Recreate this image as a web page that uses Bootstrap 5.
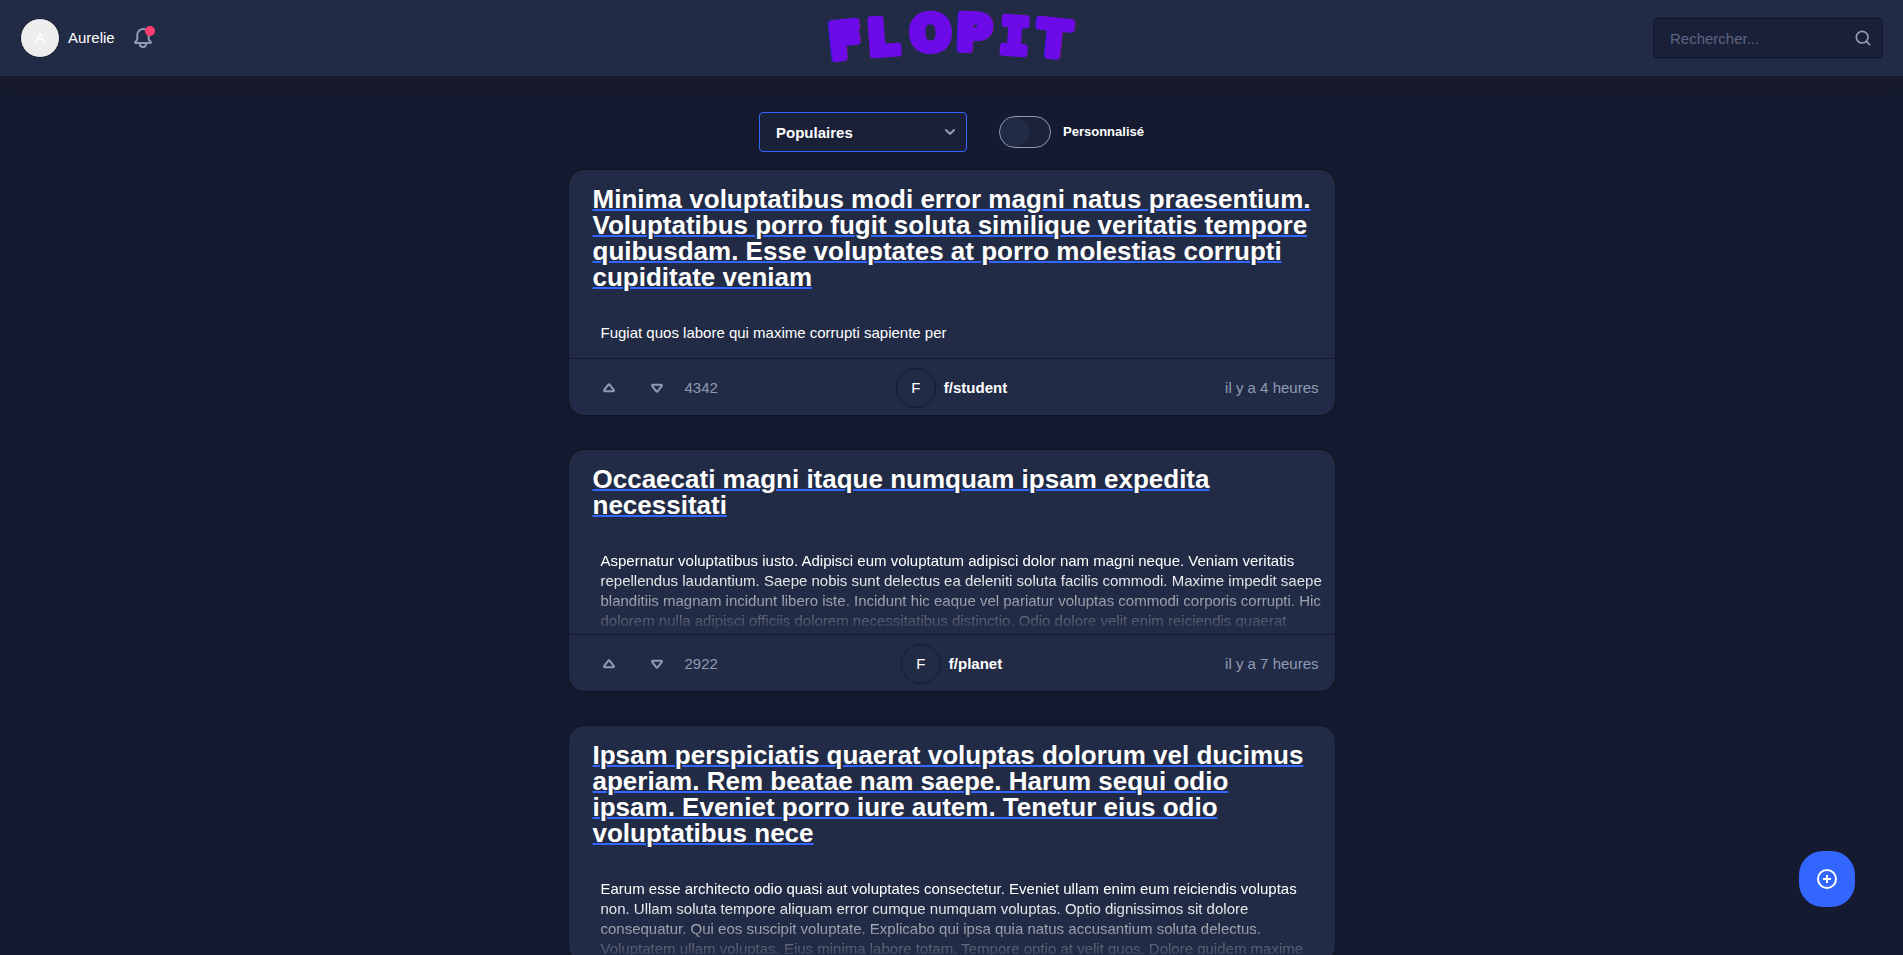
<!DOCTYPE html>
<html lang="fr">
<head>
<meta charset="utf-8">
<meta name="viewport" content="width=device-width, initial-scale=1">
<title>Flopit</title>
<link href="https://cdn.jsdelivr.net/npm/bootstrap@5.3.0/dist/css/bootstrap.min.css" rel="stylesheet">
<style>
  :root { --panel: #222b45; --page: #151a30; --field: #1a2038; --edge: #101426; --hint: #8f9bb3; --primary: #3366ff; }
  body { font-family: "Liberation Sans", Arial, sans-serif; font-size: 15px; line-height: 20px; color: #fff; background: var(--page); }
  a { color: #fff; text-decoration: none; }
  .three-cols { display: grid; grid-template-columns: 1fr auto 1fr; align-items: center; }
  .topbar { background: var(--panel); height: 76px; padding: 0 20px; box-shadow: 0 8px 16px rgba(25, 24, 38, .9); z-index: 2; }
  .avatar { width: 40px; height: 40px; border: 1px solid var(--page); border-radius: 50%; display: flex; align-items: center; justify-content: center; flex: none; }
  .avatar-light { background: #eee; }
  .bell-btn { width: 24px; height: 24px; }
  .notif-dot { position: absolute; width: 10px; height: 10px; top: 0; right: 0; border-radius: 50%; background: #ff3d71; }
  .search-box { width: 230px; height: 40px; }
  .search-box input { height: 40px; background: var(--field); border: 1px solid var(--edge); border-radius: 4px; color: #fff; font-size: 15px; padding: 0 44px 0 16px; }
  .search-box input:focus { background: var(--field); color: #fff; }
  .search-box input::placeholder { color: #5b6582; opacity: 1; }
  .search-box svg { position: absolute; right: 10px; top: 10px; }
  .feed-area { overflow-y: auto; scrollbar-width: none; padding-top: 36px; }
  .feed-area::-webkit-scrollbar { display: none; }
  .filters { gap: 12px; margin-bottom: 17px; }
  .sort-select { width: 208px; height: 40px; margin-right: 20px; background-color: var(--field); border: 1px solid var(--primary); border-radius: 4px; color: #fff; font-size: 15px; font-weight: 700; line-height: 20px; padding: 2px 36px 0 16px;
    background-image: url("data:image/svg+xml,%3Csvg xmlns='http://www.w3.org/2000/svg' viewBox='0 0 12 12' fill='none' stroke='%238f9bb3' stroke-width='2' stroke-linecap='round' stroke-linejoin='round'%3E%3Cpath d='M2 4l4 4 4-4'/%3E%3C/svg%3E"); background-size: 12px; background-position: right 10px center; }
  .toggle { appearance: none; width: 52px; height: 32px; margin: 0; border: 1px solid var(--hint); border-radius: 16px; background: radial-gradient(circle at 15px 15px, var(--panel) 14px, #1c2338 15px); }
  .toggle-label { font-size: 13px; font-weight: 700; }
  .feed { max-width: 768px; }
  .post { background: var(--panel); border: 1px solid var(--edge); border-radius: 16px; box-shadow: 0 0 8px rgba(25, 24, 38, .4); margin-bottom: 33px; }
  .post-title { font-size: 26px; line-height: 26px; font-weight: 700; margin: 16px 24px; }
  .post-title a { text-decoration: underline 2px var(--primary); }
  .post-text { padding: 17px 8px 15px 32px; max-height: 100px; overflow: hidden; }
  .faded { mask-image: linear-gradient(#000 40%, transparent); -webkit-mask-image: linear-gradient(#000 40%, transparent); }
  .post-foot { border-top: 1px solid var(--page); height: 57px; padding: 1px 16px 0; }
  .vote { width: 48px; height: 40px; display: flex; align-items: center; justify-content: center; }
  .hint { color: var(--hint); }
  .fab { right: 48px; bottom: 48px; width: 56px; height: 56px; border-radius: 24px; background: var(--primary); z-index: 3; }
</style>
</head>
<body>
<svg class="d-none" xmlns="http://www.w3.org/2000/svg">
  <symbol id="up" viewBox="0 0 12 10"><path d="M5.2 1.8 1.3 6.900c-.5.7-.1 1.300.6 1.300h8.200c.7 0 1.100-.6.600-1.300L6.800 1.800c-.4-.6-1.200-.6-1.600 0z" fill="none" stroke="#8f9bb3" stroke-width="2"/></symbol>
</svg>
<div class="vh-100 d-flex flex-column overflow-hidden">
  <header class="topbar three-cols flex-shrink-0">
    <div class="d-flex align-items-center gap-3">
      <a href="#" class="d-flex align-items-center gap-2"><span class="avatar avatar-light">A</span><span>Aurelie</span></a>
      <button class="btn p-0 border-0 position-relative bell-btn d-flex" aria-label="Notifications">
        <svg width="24" height="24" viewBox="0 0 24 24" fill="#8f9bb3"><path d="M20.520 15.210l-1.800-1.810V8.940a6.860 6.860 0 0 0-5.820-6.880 6.740 6.740 0 0 0-7.620 6.670v4.670l-1.800 1.810A1.640 1.640 0 0 0 4.640 18H8v.34A3.840 3.840 0 0 0 12 22a3.840 3.840 0 0 0 4-3.660V18h3.360a1.640 1.640 0 0 0 1.160-2.790zM14 18.340A1.880 1.880 0 0 1 12 20a1.880 1.880 0 0 1-2-1.660V18h4zM5.510 16l1.180-1.180a2 2 0 0 0 .590-1.420V8.730A4.730 4.730 0 0 1 8.900 5.170 4.670 4.670 0 0 1 12.640 4a4.860 4.860 0 0 1 4.080 4.900v4.500a2 2 0 0 0 .58 1.420L18.490 16z"/></svg>
        <span class="notif-dot"></span>
      </button>
    </div>
    <a href="#" aria-label="Flopit">
      <svg class="d-block" width="252" height="76" viewBox="0 0 252 76">
        <text x="5 43 85 130 173 210" y="59 55 51 49 52 54" rotate="-6 -4 -3 2 4 6" font-family="DejaVu Sans, sans-serif" font-weight="700" font-size="48" fill="#6c0be8" stroke="#6c0be8" stroke-width="7" stroke-linejoin="round">FLOP<tspan font-family="DejaVu Sans Mono, monospace">I</tspan>T</text>
      </svg>
    </a>
    <div class="search-box position-relative ms-auto">
      <input type="search" class="form-control shadow-none" placeholder="Rechercher..." aria-label="Rechercher">
      <svg width="20" height="20" viewBox="0 0 24 24" fill="#8f9bb3"><path d="M20.710 19.290l-3.400-3.390A7.920 7.920 0 0 0 19 11a8 8 0 1 0-8 8 7.920 7.920 0 0 0 4.900-1.690l3.390 3.400a1 1 0 0 0 1.420-1.420zM5 11a6 6 0 1 1 6 6 6 6 0 0 1-6-6z"/></svg>
    </div>
  </header>

  <main class="feed-area flex-grow-1">
    <div class="filters d-flex justify-content-center align-items-center">
      <select class="form-select shadow-none sort-select" aria-label="Tri"><option>Populaires</option><option>Récents</option></select>
      <input class="toggle" type="checkbox" role="switch" id="perso">
      <label class="toggle-label" for="perso">Personnalisé</label>
    </div>
    <div class="feed mx-auto">
      <article class="post">
        <h2 class="post-title"><a href="#">Minima voluptatibus modi error magni natus praesentium. Voluptatibus porro fugit soluta similique veritatis tempore quibusdam. Esse voluptates at porro molestias corrupti cupiditate veniam</a></h2>
        <div class="post-text">Fugiat quos labore qui maxime corrupti sapiente per</div>
        <footer class="post-foot three-cols">
          <div class="d-flex align-items-center">
            <button class="btn border-0 p-0 vote" aria-label="Voter pour"><svg width="12" height="10"><use href="#up"/></svg></button>
            <button class="btn border-0 p-0 vote" aria-label="Voter contre"><svg width="12" height="10"><use href="#up" transform="rotate(180 6 5)"/></svg></button>
            <span class="hint ms-1">4342</span>
          </div>
          <a href="#" class="d-flex align-items-center gap-2"><span class="avatar">F</span><b>f/student</b></a>
          <span class="hint text-end">il y a 4 heures</span>
        </footer>
      </article>
      <article class="post">
        <h2 class="post-title"><a href="#">Occaecati magni itaque numquam ipsam expedita necessitati</a></h2>
        <div class="post-text faded">Aspernatur voluptatibus iusto. Adipisci eum voluptatum adipisci dolor nam magni neque. Veniam veritatis repellendus laudantium. Saepe nobis sunt delectus ea deleniti soluta facilis commodi. Maxime impedit saepe blanditiis magnam incidunt libero iste. Incidunt hic eaque vel pariatur voluptas commodi corporis corrupti. Hic dolorem nulla adipisci officiis dolorem necessitatibus distinctio. Odio dolore velit enim reiciendis quaerat</div>
        <footer class="post-foot three-cols">
          <div class="d-flex align-items-center">
            <button class="btn border-0 p-0 vote" aria-label="Voter pour"><svg width="12" height="10"><use href="#up"/></svg></button>
            <button class="btn border-0 p-0 vote" aria-label="Voter contre"><svg width="12" height="10"><use href="#up" transform="rotate(180 6 5)"/></svg></button>
            <span class="hint ms-1">2922</span>
          </div>
          <a href="#" class="d-flex align-items-center gap-2"><span class="avatar">F</span><b>f/planet</b></a>
          <span class="hint text-end">il y a 7 heures</span>
        </footer>
      </article>
      <article class="post">
        <h2 class="post-title"><a href="#">Ipsam perspiciatis quaerat voluptas dolorum vel ducimus aperiam. Rem beatae nam saepe. Harum sequi odio ipsam. Eveniet porro iure autem. Tenetur eius odio voluptatibus nece</a></h2>
        <div class="post-text faded">Earum esse architecto odio quasi aut voluptates consectetur. Eveniet ullam enim eum reiciendis voluptas non. Ullam soluta tempore aliquam error cumque numquam voluptas. Optio dignissimos sit dolore consequatur. Qui eos suscipit voluptate. Explicabo qui ipsa quia natus accusantium soluta delectus. Voluptatem ullam voluptas. Eius minima labore totam. Tempore optio at velit quos. Dolore quidem maxime</div>
      </article>
    </div>
  </main>
</div>
<button class="btn border-0 p-0 position-fixed fab d-flex align-items-center justify-content-center" aria-label="Nouveau post">
  <svg width="24" height="24" viewBox="0 0 24 24" fill="none" stroke="#fff" stroke-width="2"><circle cx="12" cy="12" r="9"/><path d="M12 8v8M8 12h8"/></svg>
</button>
<script src="https://cdn.jsdelivr.net/npm/bootstrap@5.3.0/dist/js/bootstrap.bundle.min.js"></script>
</body>
</html>
